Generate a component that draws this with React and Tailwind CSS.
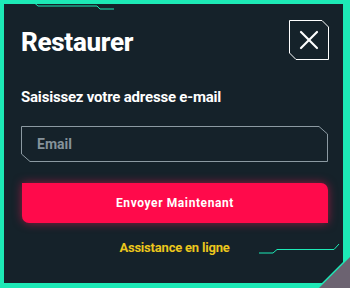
import React from 'react';

// --- ICONS / DECOR ---
const CloseFrame = () => (
  <svg className="absolute inset-0" width="40" height="40" viewBox="0 0 40 40" fill="none">
    <polygon points="0.5,0.5 33,0.5 39.5,7 39.5,39.5 7,39.5 0.5,33" stroke="#ffffff" strokeWidth="1" />
  </svg>
);

const XIcon = () => (
  <svg width="20" height="20" viewBox="0 0 20 20" fill="none" stroke="#ffffff" strokeWidth="2.2" strokeLinecap="round">
    <line x1="2" y1="2" x2="18" y2="18" />
    <line x1="18" y1="2" x2="2" y2="18" />
  </svg>
);

const TopLine = () => (
  <svg className="absolute left-0 top-0" width="120" height="16" viewBox="0 0 120 16" fill="none">
    <polyline points="31,0 38,6 97,6 100,9 114,9" stroke="#1de9b6" strokeWidth="1" />
  </svg>
);

const BottomLine = () => (
  <svg className="absolute left-0 top-0" width="350" height="288" viewBox="0 0 350 288" fill="none">
    <polyline points="259,253 273,253 277,249.5 334,249.5 339,244" stroke="#1de9b6" strokeWidth="1" />
  </svg>
);

const InputFrame = () => (
  <svg className="absolute inset-0" width="307" height="36" viewBox="0 0 307 36" fill="none">
    <polygon points="0.5,0.5 298,0.5 306.5,8 306.5,35.5 9,35.5 0.5,28" stroke="#8c9aa2" strokeWidth="1" />
  </svg>
);

export default function App() {
  return (
    <div className="w-[350px] h-[288px] bg-[#6c6371] relative overflow-hidden" style={{ fontFamily: 'Roboto, "Noto Sans", sans-serif' }}>
      <div className="w-full h-full bg-[#1de9b6] pt-[4px] pl-[4px] pr-[7px] pb-[5px] [clip-path:polygon(0_0,100%_0,100%_257px,319px_100%,0_100%)]">
        <div className="w-full h-full bg-[#15222a] flex flex-col [clip-path:polygon(0_0,100%_0,100%_258px,318px_100%,0_100%)]">
          <div className="flex justify-between items-start pl-[17px] pr-[14px] pt-[16px]">
            <h1 className="text-[26px] font-extrabold text-white tracking-[-0.3px] mt-[9px] leading-none">Restaurer</h1>
            <button className="relative w-[40px] h-[40px] flex items-center justify-center">
              <CloseFrame />
              <XIcon />
            </button>
          </div>
          <p className="pl-[17px] mt-[30px] text-[15px] font-bold text-white leading-none tracking-[-0.2px]">Saisissez votre adresse e-mail</p>
          <div className="relative ml-[17px] mt-[21px] w-[307px] h-[36px]">
            <InputFrame />
            <input
              type="email"
              placeholder="Email"
              className="relative w-full h-full bg-transparent pl-[16px] text-[14px] font-bold text-white placeholder:text-[#85929a] outline-none"
            />
          </div>
          <button className="ml-[18px] mt-[21px] w-[306px] h-[40px] bg-[#ff0a4b] rounded-tr-[7px] rounded-bl-[7px] shadow-[0_0_10px_rgba(255,20,80,0.55)] text-white text-[12px] font-bold tracking-[0.6px]">
            Envoyer Maintenant
          </button>
          <p className="mt-[18px] text-center text-[13px] font-bold text-[#ecc71c] tracking-[-0.2px] pl-[2px] leading-none">Assistance en ligne</p>
        </div>
      </div>
      <div className="absolute inset-0 pointer-events-none">
        <TopLine />
        <BottomLine />
      </div>
    </div>
  );
}
